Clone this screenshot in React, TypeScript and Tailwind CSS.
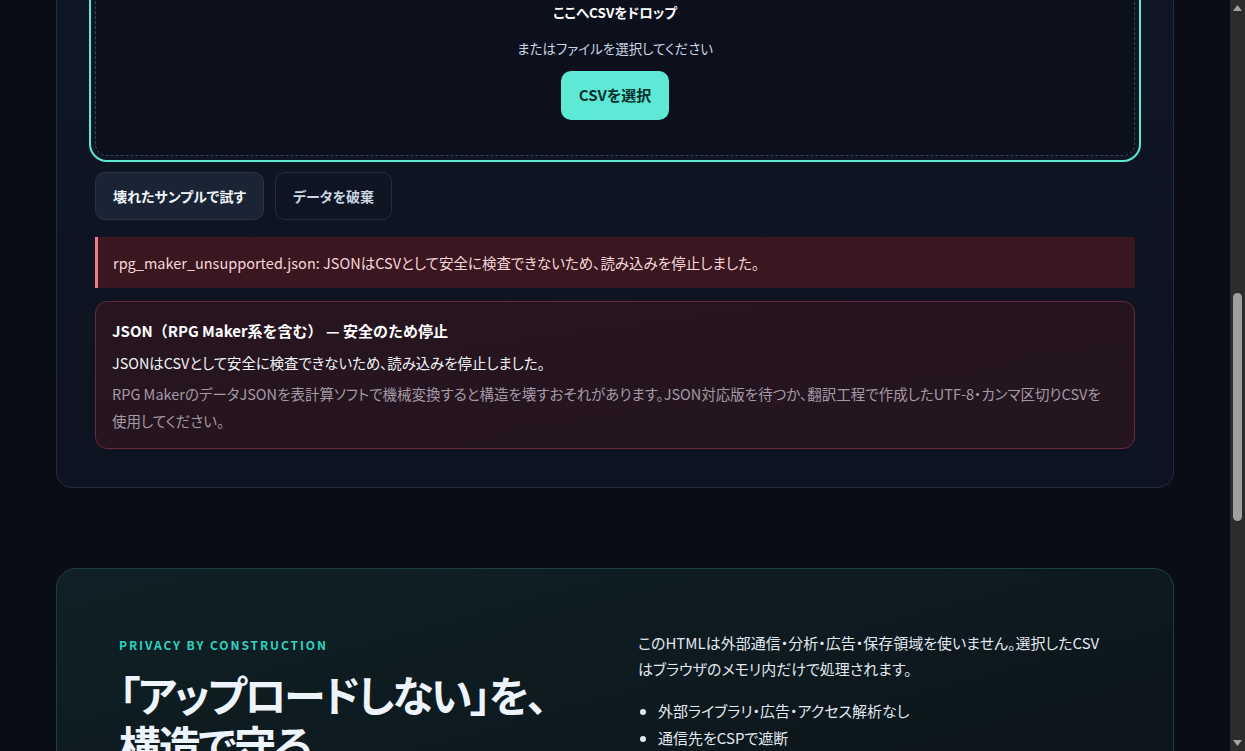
import { useLayoutEffect, useRef } from 'react'

const font = { fontFamily: '"Noto Sans CJK JP", "Noto Sans", sans-serif', fontFeatureSettings: '"palt"' }

function ScrollBar() {
  return (
    <div className="flex h-screen w-[15px] shrink-0 flex-col items-center bg-[#2c2c2c]">
      <svg className="mt-[5px] h-[6px] w-[9px]" viewBox="0 0 9 6"><path d="M4.5 0L9 6H0z" fill="#a3a3a3" /></svg>
      <div className="h-[282px] shrink-0" />
      <div className="h-[228px] w-[9px] shrink-0 rounded-full bg-[#9f9f9f]" />
      <div className="flex-1" />
      <svg className="mb-[5px] h-[6px] w-[9px]" viewBox="0 0 9 6"><path d="M0 0h9L4.5 6z" fill="#a3a3a3" /></svg>
    </div>
  )
}

export default function App() {
  const viewRef = useRef<HTMLDivElement>(null)
  const rowRef = useRef<HTMLDivElement>(null)

  // 検査パネルの位置までスクロール
  useLayoutEffect(() => {
    const view = viewRef.current
    const row = rowRef.current
    if (!view || !row) return
    const offset = row.getBoundingClientRect().top - view.getBoundingClientRect().top + view.scrollTop
    view.scrollTop = offset - 172
  }, [])

  return (
    <div className="flex h-screen bg-[#0a0d14] text-slate-100" style={font}>
      <div ref={viewRef} className="h-screen flex-1 overflow-hidden">
        {/* ヘッダー */}
        <header className="border-b border-[#1a2230]">
          <div className="mx-auto flex h-16 w-[1118px] items-center justify-between">
            <div className="flex items-center gap-3">
              <div className="flex h-8 w-8 items-center justify-center rounded-lg bg-[#5ee8d6] text-sm font-bold text-[#062a26]">C</div>
              <span className="text-[15px] font-bold">CSV Safe Check</span>
            </div>
            <nav className="flex gap-6 text-sm text-slate-400">
              <span>使い方</span>
              <span>プライバシー</span>
              <span>FAQ</span>
            </nav>
          </div>
        </header>

        {/* ヒーロー */}
        <section className="mx-auto w-[1118px] pb-16 pt-24">
          <p className="text-xs font-semibold tracking-[0.16em] text-[#2dd4bf]">LOCAL CSV INSPECTOR</p>
          <h1 className="mt-4 text-[44px] font-bold leading-tight tracking-[-0.02em]">翻訳CSVを、送らずに検査する。</h1>
          <p className="mt-5 w-[640px] text-[15px] leading-7 text-slate-400">
            文字コード・区切り文字・列数のずれをブラウザ内だけで確認します。ファイルはどこにも送信されません。
          </p>
        </section>

        {/* 検査パネル */}
        <section className="mx-auto w-[1118px] rounded-2xl border border-[#222c3c] bg-gradient-to-b from-[#101726] to-[#0d1320] p-[38px]">
          <h2 className="text-xl font-bold">CSVを読み込む</h2>
          <p className="mt-2 text-sm text-slate-400">UTF-8・カンマ区切りのCSVに対応しています。</p>

          <div className="mt-6 rounded-xl border border-dashed border-[#3a4558] bg-[#0b101c] px-6 pb-[35px] pt-[64px] text-center outline-2 outline-offset-4 outline-[#5ee8d6] [outline-style:solid]">
            <svg className="mx-auto h-10 w-10 text-[#5ee8d6]" fill="none" stroke="currentColor" strokeWidth={1.6} viewBox="0 0 24 24">
              <path strokeLinecap="round" strokeLinejoin="round" d="M12 16V4m0 0l-4 4m4-4l4 4M4 16v3a1 1 0 001 1h14a1 1 0 001-1v-3" />
            </svg>
            <p className="mt-5 text-[13.5px] font-bold leading-6 text-white">ここへCSVをドロップ</p>
            <p className="mt-[12px] text-[13.5px] leading-6 text-slate-300">またはファイルを選択してください</p>
            <button className="mt-[11px] h-[49px] rounded-[10px] bg-[#5ee8d6] px-[18px] text-[15px] font-bold text-[#06302b]">
              CSVを選択
            </button>
          </div>

          <div ref={rowRef} className="mt-4 flex gap-[11px]">
            <button className="h-12 rounded-[10px] border border-[#2a3548] bg-[#1a2435] px-[17px] text-[14px] font-bold text-slate-100">
              壊れたサンプルで試す
            </button>
            <button className="h-12 rounded-[10px] border border-[#222c3c] bg-transparent px-[17px] text-[14px] font-bold text-slate-300">
              データを破棄
            </button>
          </div>

          <div className="mt-[17px] flex h-[51px] items-center border-l-[3px] border-[#f07a86] bg-[#3a1620] pl-[15px] text-[14.5px] text-[#f6d6da]">
            rpg_maker_unsupported.json: JSONはCSVとして安全に検査できないため、読み込みを停止しました。
          </div>

          <div className="mt-[13px] rounded-xl border border-[#6a2a3c] bg-gradient-to-br from-[#27141f] to-[#24151f] px-4 pb-[14px] pt-[17px]">
            <p className="text-[15px] font-bold leading-6 text-white [font-feature-settings:normal]">JSON（RPG Maker系を含む） — 安全のため停止</p>
            <p className="mt-2 text-[14.4px] leading-6 text-slate-100">JSONはCSVとして安全に検査できないため、読み込みを停止しました。</p>
            <p className="mt-[5px] pr-[10px] text-[14.5px] leading-[27px] text-[#a49aa6]">
              RPG MakerのデータJSONを表計算ソフトで機械変換すると構造を壊すおそれがあります。JSON対応版を待つか、翻訳工程で作成したUTF-8・カンマ区切りCSVを使用してください。
            </p>
          </div>
        </section>

        {/* プライバシー */}
        <section className="mx-auto mt-20 grid w-[1118px] grid-cols-2 gap-[46px] rounded-[20px] border border-[#1d3f40] bg-gradient-to-br from-[#0f2126] to-[#0b1218] px-[62px] pb-16 pt-[61px]">
          <div className="pt-[7px]">
            <p className="text-xs font-semibold leading-4 tracking-[0.16em] text-[#2dd4bf]">PRIVACY BY CONSTRUCTION</p>
            <h2 className="mt-[16px] text-[42px] font-bold leading-[1.2] tracking-[-0.055em] text-[#eef4fb]">
              「アップロードしない」を、<br />構造で守る
            </h2>
          </div>
          <div>
            <p className="text-[15px] leading-[26px] text-slate-200">
              このHTMLは外部通信・分析・広告・保存領域を使いません。選択したCSVはブラウザのメモリ内だけで処理されます。
            </p>
            <ul className="mt-[17px] list-disc space-y-[3px] pl-5 text-[15px] leading-6 text-slate-200">
              <li>外部ライブラリ・広告・アクセス解析なし</li>
              <li>通信先をCSPで遮断</li>
              <li>保存領域（Cookie・localStorage）を使わない</li>
              <li>タブを閉じればデータは消える</li>
            </ul>
          </div>
        </section>

        {/* よくある質問 */}
        <section className="mx-auto mt-20 w-[1118px]">
          <h2 className="text-2xl font-bold">よくある質問</h2>
          <div className="mt-6 divide-y divide-[#1c2433] rounded-2xl border border-[#1c2433] bg-[#0e1420]">
            {['Excelで保存したCSVは使えますか？', 'Shift_JISのファイルはどうなりますか？', 'JSONに対応する予定はありますか？', 'オフラインでも動きますか？'].map(q => (
              <div key={q} className="px-8 py-6 text-[15px] text-slate-200">{q}</div>
            ))}
          </div>
        </section>

        <footer className="mx-auto mt-24 w-[1118px] border-t border-[#1a2230] py-10 text-sm text-slate-500">
          © CSV Safe Check — すべての処理はブラウザ内で完結します。
        </footer>
      </div>
      <ScrollBar />
    </div>
  )
}
